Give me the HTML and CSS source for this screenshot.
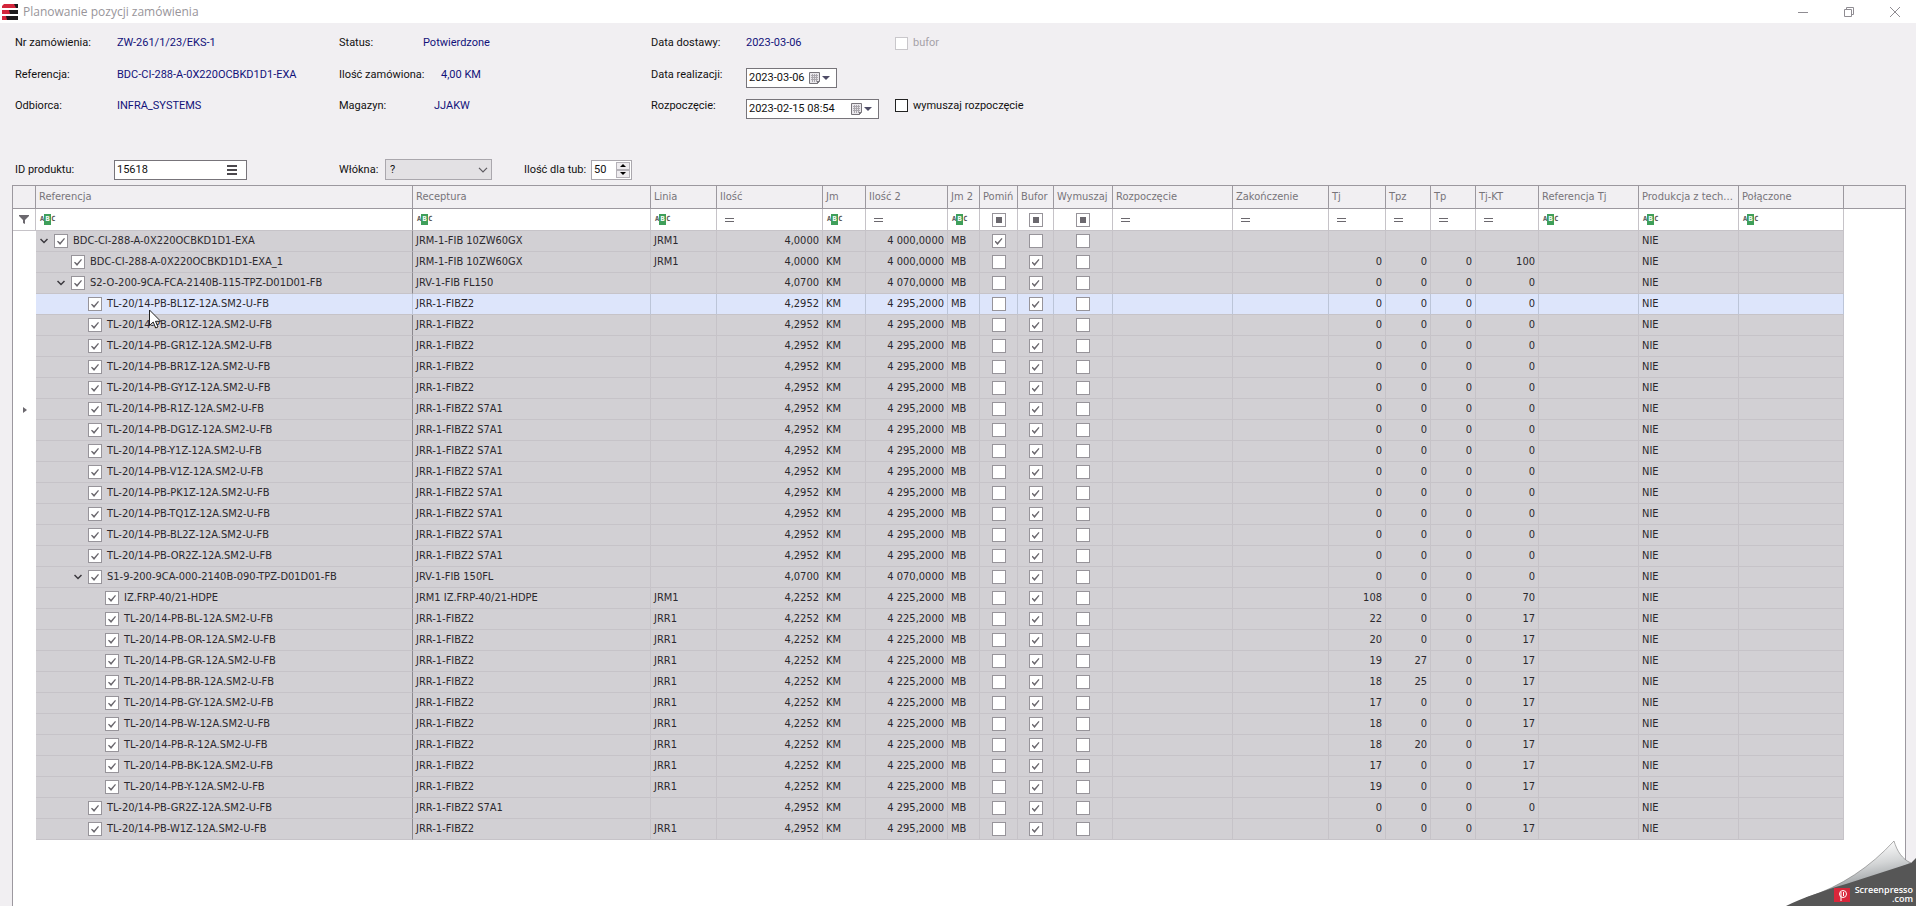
FILE: index.html
```html
<!DOCTYPE html>
<html lang="pl">
<head>
    <meta charset="UTF-8">
    <meta name="viewport" content="width=device-width, initial-scale=1.0">
    <title>Planowanie pozycji zamówienia</title>
    <link rel="stylesheet" href="styles.css">
</head>
<body>
    <header class="titlebar">
        <svg class="app-icon" width="16" height="16" viewBox="0 0 16 16">
            <path fill="#1d1a1c" d="M2 0h14v4H2zM0 6h16v4H0zM0 12h16v4H0z"/>
            <path fill="#d3263b" d="M2 0h10l2 4H0V2zM0 6h7l1 4H0zM0 12h4l1 4H0z"/>
            <path fill="#fff" d="M0 4h16v1H0zM8 10h8v1H8z"/>
        </svg>
        <h1>Planowanie pozycji zamówienia</h1>
        <div class="win-buttons">
            <button type="button" aria-label="Minimalizuj"><svg width="12" height="12" viewBox="0 0 12 12"><path d="M1 6.5h10"/></svg></button>
            <button type="button" aria-label="Przywróć"><svg width="12" height="12" viewBox="0 0 12 12"><path d="M1.5 3.5h7v7h-7zM3.5 3.5v-2h7v7h-2"/></svg></button>
            <button type="button" aria-label="Zamknij"><svg width="12" height="12" viewBox="0 0 12 12"><path d="M1 1l10 10M11 1L1 11"/></svg></button>
        </div>
    </header>

    <section class="info">
        <span>Nr zamówienia:</span>
        <span class="value">ZW-261/1/23/EKS-1</span>
        <div class="pair status"><span>Status:</span><span class="value">Potwierdzone</span></div>
        <span>Data dostawy:</span>
        <span class="value">2023-03-06</span>
        <label class="check off"><input type="checkbox" disabled>bufor</label>

        <span>Referencja:</span>
        <span class="value">BDC-CI-288-A-0X220OCBKD1D1-EXA</span>
        <div class="pair amount"><span>Ilość zamówiona:</span><span class="value">4,00 KM</span></div>
        <label for="realizacja">Data realizacji:</label>
        <div class="box date short">
            <input type="text" id="realizacja" value="2023-03-06">
            <button type="button" aria-label="Kalendarz"><svg class="cal" width="21" height="12" viewBox="0 0 21 12"><use href="#calendar"/></svg></button>
        </div>
        <span></span>

        <span>Odbiorca:</span>
        <span class="value">INFRA_SYSTEMS</span>
        <div class="pair store"><span>Magazyn:</span><span class="value">JJAKW</span></div>
        <label for="rozpoczecie">Rozpoczęcie:</label>
        <div class="box date">
            <input type="text" id="rozpoczecie" value="2023-02-15 08:54">
            <button type="button" aria-label="Kalendarz"><svg class="cal" width="21" height="12" viewBox="0 0 21 12"><use href="#calendar"/></svg></button>
        </div>
        <label class="check"><input type="checkbox">wymuszaj rozpoczęcie</label>
    </section>

    <section class="product">
        <label class="l-id" for="produkt">ID produktu:</label>
        <div class="box id">
            <input type="text" id="produkt" value="15618">
            <button type="button" aria-label="Lista"><svg width="10" height="10" viewBox="0 0 10 10"><path fill="#4b484d" d="M0 0h10v2H0zM0 4h10v2H0zM0 8h10v2H0z"/></svg></button>
        </div>
        <label class="l-fib" for="wlokna">Włókna:</label>
        <div class="fibers">
            <select id="wlokna"><option>?</option></select>
            <svg width="10" height="6" viewBox="0 0 10 6"><path fill="none" stroke="#5d5a60" stroke-width="1.2" d="M1 .8l4 4 4-4"/></svg>
        </div>
        <label class="l-tub" for="tub">Ilość dla tub:</label>
        <div class="box spin">
            <input type="text" id="tub" value="50">
            <div class="arrows">
                <button type="button" aria-label="Więcej"><svg width="6" height="3" viewBox="0 0 6 3"><path d="M3 0l3 3H0z"/></svg></button>
                <button type="button" aria-label="Mniej"><svg width="6" height="3" viewBox="0 0 6 3"><path d="M0 0h6L3 3z"/></svg></button>
            </div>
        </div>
    </section>

    <main class="grid">
        <table>
            <colgroup id="cols"></colgroup>
            <thead>
                <tr id="head"></tr>
                <tr id="filter" class="filter"></tr>
            </thead>
            <tbody id="rows"></tbody>
        </table>
    </main>

    <svg class="cursor" width="13" height="20" viewBox="0 0 13 20">
        <path fill="#fff" stroke="#222" d="M.5 1v15.5l3.7-3.5 2.5 6 2.3-1-2.5-5.7h5.2z"/>
    </svg>

    <div class="curl">
        <svg width="130" height="68" viewBox="0 0 130 68">
            <defs>
                <linearGradient id="paper" x1="0.5" y1="0.1" x2="0.75" y2="0.9">
                    <stop offset="0" stop-color="#fbfbfb"/>
                    <stop offset="0.4" stop-color="#d3d5d6"/>
                    <stop offset="0.8" stop-color="#9a9ea1"/>
                    <stop offset="1" stop-color="#8b8f92"/>
                </linearGradient>
            </defs>
            <path fill="url(#paper)" stroke="#777" stroke-width=".6" d="M108 3c3 10 8 18 17 22L86 42 20 60C56 48 84 29 108 3z"/>
            <path fill="#565656" d="M0 68C16 60 40 52 60 46L125 25l5-5v48z"/>
            <rect x="48" y="50" width="16" height="14" fill="#d9263a"/>
            <g fill="none" stroke="#fff">
                <circle cx="57" cy="56" r="3.5"/>
                <path d="M55 54v9M57.500 54v4"/>
            </g>
        </svg>
        <p>Screenpresso<br>.com</p>
    </div>

    <svg class="defs" width="0" height="0">
        <symbol id="calendar" viewBox="0 0 21 12">
            <path fill="#e9e7eb" stroke="#77747a" d="M.5.5h10v8.5l-2 2.5h-8z"/>
            <path stroke="#aaa7ad" d="M2 3.5h7M2 5.5h7M2 7.5h7M3.5 2v8M5.5 2v8M7.5 2v8"/>
            <path fill="#77747a" d="M8 12V9h3z"/>
            <path fill="#4e4c66" d="M13 4h8l-4 4z"/>
        </symbol>
    </svg>

    <script>
        // name, width, filter type, cell align
        const columns=[
            ["",23,"funnel",""],
            ["Referencja",377,"abc",""],
            ["Receptura",238,"abc",""],
            ["Linia",66,"abc",""],
            ["Ilość",106,"eq","num"],
            ["Jm",43,"abc",""],
            ["Ilość 2",82,"eq","num"],
            ["Jm 2",32,"abc",""],
            ["Pomiń",38,"box","mid"],
            ["Bufor",36,"box","mid"],
            ["Wymuszaj",59,"box","mid"],
            ["Rozpoczęcie",120,"eq",""],
            ["Zakończenie",96,"eq",""],
            ["Tj",57,"eq","num"],
            ["Tpz",45,"eq","num"],
            ["Tp",45,"eq","num"],
            ["Tj-KT",63,"eq","num"],
            ["Referencja Tj",100,"abc",""],
            ["Produkcja z tech...",100,"abc",""],
            ["Połączone",105,"abc",""],
            ["",0,"",""]
        ];

        // level, reference, recipe, line, qty, qty 2, tj, tpz, tp, tj-kt
        const z="JRR-1-FIBZ2", s="JRR-1-FIBZ2 S7A1";
        const a="4,2952", a2="4 295,2000", b="4,2252", b2="4 225,2000";
        const items=[
            [0,"BDC-CI-288-A-0X220OCBKD1D1-EXA","JRM-1-FIB 10ZW60GX","JRM1","4,0000","4 000,0000","","","",""],
            [1,"BDC-CI-288-A-0X220OCBKD1D1-EXA_1","JRM-1-FIB 10ZW60GX","JRM1","4,0000","4 000,0000",0,0,0,100],
            [1,"S2-O-200-9CA-FCA-2140B-115-TPZ-D01D01-FB","JRV-1-FIB FL150","","4,0700","4 070,0000",0,0,0,0],
            [2,"TL-20/14-PB-BL1Z-12A.SM2-U-FB",z,"",a,a2,0,0,0,0],
            [2,"TL-20/14-PB-OR1Z-12A.SM2-U-FB",z,"",a,a2,0,0,0,0],
            [2,"TL-20/14-PB-GR1Z-12A.SM2-U-FB",z,"",a,a2,0,0,0,0],
            [2,"TL-20/14-PB-BR1Z-12A.SM2-U-FB",z,"",a,a2,0,0,0,0],
            [2,"TL-20/14-PB-GY1Z-12A.SM2-U-FB",z,"",a,a2,0,0,0,0],
            [2,"TL-20/14-PB-R1Z-12A.SM2-U-FB",s,"",a,a2,0,0,0,0],
            [2,"TL-20/14-PB-DG1Z-12A.SM2-U-FB",s,"",a,a2,0,0,0,0],
            [2,"TL-20/14-PB-Y1Z-12A.SM2-U-FB",s,"",a,a2,0,0,0,0],
            [2,"TL-20/14-PB-V1Z-12A.SM2-U-FB",s,"",a,a2,0,0,0,0],
            [2,"TL-20/14-PB-PK1Z-12A.SM2-U-FB",s,"",a,a2,0,0,0,0],
            [2,"TL-20/14-PB-TQ1Z-12A.SM2-U-FB",s,"",a,a2,0,0,0,0],
            [2,"TL-20/14-PB-BL2Z-12A.SM2-U-FB",s,"",a,a2,0,0,0,0],
            [2,"TL-20/14-PB-OR2Z-12A.SM2-U-FB",s,"",a,a2,0,0,0,0],
            [2,"S1-9-200-9CA-000-2140B-090-TPZ-D01D01-FB","JRV-1-FIB 150FL","","4,0700","4 070,0000",0,0,0,0],
            [3,"IZ.FRP-40/21-HDPE","JRM1 IZ.FRP-40/21-HDPE","JRM1",b,b2,108,0,0,70],
            [3,"TL-20/14-PB-BL-12A.SM2-U-FB",z,"JRR1",b,b2,22,0,0,17],
            [3,"TL-20/14-PB-OR-12A.SM2-U-FB",z,"JRR1",b,b2,20,0,0,17],
            [3,"TL-20/14-PB-GR-12A.SM2-U-FB",z,"JRR1",b,b2,19,27,0,17],
            [3,"TL-20/14-PB-BR-12A.SM2-U-FB",z,"JRR1",b,b2,18,25,0,17],
            [3,"TL-20/14-PB-GY-12A.SM2-U-FB",z,"JRR1",b,b2,17,0,0,17],
            [3,"TL-20/14-PB-W-12A.SM2-U-FB",z,"JRR1",b,b2,18,0,0,17],
            [3,"TL-20/14-PB-R-12A.SM2-U-FB",z,"JRR1",b,b2,18,20,0,17],
            [3,"TL-20/14-PB-BK-12A.SM2-U-FB",z,"JRR1",b,b2,17,0,0,17],
            [3,"TL-20/14-PB-Y-12A.SM2-U-FB",z,"JRR1",b,b2,19,0,0,17],
            [2,"TL-20/14-PB-GR2Z-12A.SM2-U-FB",s,"",a,a2,0,0,0,0],
            [2,"TL-20/14-PB-W1Z-12A.SM2-U-FB",z,"JRR1",a,a2,0,0,0,17]
        ];
        const parents=[0,2,16];
        const selected=3;
        const current=8;

        const filters={
            "":"",
            funnel:'<svg class="funnel" width="10" height="9" viewBox="0 0 10 9"><path d="M0 0h10v1L6 5v4L4 8V5L0 1z"/></svg>',
            abc:'<span class="abc"><i>A</i><b>B</b><i>C</i></span>',
            eq:'<svg class="eq" width="9" height="4" viewBox="0 0 9 4"><path d="M0 0h9v1H0zM0 3h9v1H0z"/></svg>',
            box:'<input type="checkbox" class="any" aria-label="Filtr">'
        };
        const arrow='<svg width="8" height="6" viewBox="0 0 8 6"><path d="M.5 1L4 4.5 7.5 1"/></svg>';
        const tick=(on,name)=>`<input type="checkbox" aria-label="${name}" ${on?"checked":""}>`;

        document.getElementById("cols").innerHTML=columns.map(c=>c[1]?`<col style="width:${c[1]}px">`:"<col>").join("");
        document.getElementById("head").innerHTML=columns.map(c=>`<th>${c[0]}</th>`).join("");
        document.getElementById("filter").innerHTML=columns.map(c=>`<td class="${c[2]=="box"?"mid":""}">${filters[c[2]]}</td>`).join("");

        document.getElementById("rows").innerHTML=items.map((r,i)=>{
            const tree=`<div class="tree" style="padding-left:${r[0]*17}px"><span class="toggle">${parents.includes(i)?arrow:""}</span>${tick(true,"Wybierz")}<span>${r[1]}</span></div>`;
            const mark=i==current?'<svg class="mark" width="4" height="6" viewBox="0 0 4 6"><path d="M0 0l4 3-4 3z"/></svg>':"";
            const cells=[mark,tree,r[2],r[3],r[4],"KM",r[5],"MB",tick(i==0,"Pomiń"),tick(i!=0,"Bufor"),tick(false,"Wymuszaj"),"","",r[6],r[7],r[8],r[9],"","NIE","",""];
            return `<tr class="${i==selected?"selected":""}">`+cells.map((c,n)=>`<td class="${columns[n][3]}">${c}</td>`).join("")+"</tr>";
        }).join("");

        document.querySelectorAll(".any").forEach(box=>box.indeterminate=true);
    </script>
</body>
</html>
```
FILE: styles.css
```css
*{
    margin:0;
    padding:0;
    box-sizing: border-box;
}
body{
    height: 100vh;
    display: flex;
    flex-direction: column;
    overflow: hidden;
    position: relative;
    background-color: #f1eff2;
    color: #111;
    font-family: Roboto, "Liberation Sans", sans-serif;
    font-size: 11px;
    line-height: 16px;
}
button, input, select{
    font: inherit;
    color: inherit;
    border: none;
    background: none;
    outline: none;
}
button{
    display: flex;
    align-items: center;
    justify-content: center;
}
.defs{
    position: absolute;
}

/* title bar */
.titlebar{
    height: 23px;
    flex: none;
    display: flex;
    align-items: center;
    gap: 5px;
    padding-left: 2px;
    background-color: #fff;
}
.titlebar h1{
    flex: 1;
    font-family: "Open Sans", sans-serif;
    font-size: 12px;
    font-weight: normal;
    color: #98959a;
}
.win-buttons{
    display: flex;
    gap: 4px;
}
.win-buttons button{
    width: 42px;
    height: 20px;
}
.win-buttons path{
    fill: none;
    stroke: #8f8c92;
}

/* order info */
.info{
    flex: none;
    display: grid;
    grid-template-columns: 102px 222px 312px 95px 149px 1fr;
    grid-template-rows: 32px 31px 31px;
    align-items: center;
    padding: 4px 15px 0;
}
.value{
    color: #12127a;
}
.pair{
    display: flex;
}
.status span:first-child{
    width: 84px;
}
.amount span:first-child{
    width: 102px;
}
.store span:first-child{
    width: 95px;
}
.box{
    height: 20px;
    display: flex;
    align-items: center;
    background-color: #fff;
    border: 1px solid #77747a;
}
.box input{
    flex: 1;
    min-width: 0;
    padding-left: 2px;
}
.date{
    width: 133px;
    margin-top: 6px;
    padding-right: 6px;
}
.short{
    width: 91px;
}
.check{
    display: flex;
    align-items: center;
    gap: 5px;
}
.off{
    color: #a5a2a8;
}
input[type=checkbox]{
    appearance: none;
    flex: none;
    display: block;
    width: 14px;
    height: 14px;
    background-color: #fff;
    border: 1px solid #97949a;
}
.check input[type=checkbox]{
    width: 13px;
    height: 13px;
    border-color: #222;
}
.off input[type=checkbox]{
    border-color: #c9c7cb;
}
td input:checked::after{
    content: "";
    display: block;
    width: 8px;
    height: 7px;
    margin: 3px 2px;
    background-color: #6b686e;
    clip-path: polygon(0 50%, 12% 38%, 38% 65%, 88% 0, 100% 12%, 38% 100%);
}
td input:indeterminate::after{
    content: "";
    display: block;
    width: 6px;
    height: 6px;
    margin: 3px;
    background-color: #6b686e;
}

/* product row */
.product{
    flex: none;
    display: flex;
    align-items: center;
    height: 21px;
    margin: 38px 15px 5px;
    white-space: nowrap;
}
.l-id{
    width: 99px;
}
.id{
    width: 133px;
    padding-right: 9px;
}
.l-fib{
    width: 46px;
    margin-left: 92px;
}
.fibers{
    position: relative;
    width: 107px;
}
.fibers select{
    display: block;
    appearance: none;
    width: 100%;
    height: 21px;
    padding-left: 4px;
    background-color: #e3e1e4;
    border: 1px solid #aaa7ad;
}
.fibers svg{
    position: absolute;
    right: 4px;
    top: 8px;
}
.l-tub{
    width: 67px;
    margin-left: 32px;
}
.spin{
    width: 41px;
    padding-right: 1px;
    border-color: #aaa7ad;
}
.arrows{
    width: 14px;
}
.arrows button{
    width: 14px;
    height: 8px;
    background-color: #eeecef;
    border: 1px solid #b5b2b8;
}

/* data grid */
.grid{
    flex: 1;
    min-height: 0;
    overflow: hidden;
    margin: 0 10px 0 12px;
    background-color: #fff;
    border: 1px solid #9c989f;
    border-bottom: none;
}
table{
    width: 100%;
    table-layout: fixed;
    border-collapse: separate;
    border-spacing: 0;
    font-family: "DejaVu Sans Condensed", "DejaVu Sans", sans-serif;
    font-size: 11px;
}
th{
    height: 23px;
    padding: 0 3px;
    overflow: hidden;
    white-space: nowrap;
    text-align: left;
    font-weight: normal;
    color: #77747a;
    background-color: #f1eff2;
    border-right: 1px solid #9c989f;
    border-bottom: 1px solid #9c989f;
}
th:last-child{
    border-right: none;
}
td{
    height: 21px;
    padding: 0 3px;
    line-height: 14px;
    white-space: nowrap;
    color: #2b282d;
    background-color: #d2d0d4;
    border-right: 1px solid #c6c3c8;
    border-bottom: 1px solid #c6c3c8;
}
.filter td{
    height: 22px;
    background-color: #fff;
}
td:nth-child(2){
    border-right-color: #8c898f;
}
.selected td{
    background-color: #dde5fb;
    border-right-color: #bcc5d8;
}
tbody td:first-child, tr td:last-child{
    background-color: #fff;
    border: none;
}
.num{
    text-align: right;
}
.mid{
    padding: 0;
}
.mid input{
    margin: 0 auto;
}
.tree{
    display: flex;
    align-items: center;
}
.tree input{
    margin-right: 5px;
}
.toggle{
    width: 15px;
    padding-left: 1px;
    display: flex;
}
.toggle path{
    fill: none;
    stroke: #3a373d;
    stroke-width: 1.5;
}
.mark, .funnel, .eq{
    display: block;
    margin: 0 auto;
    fill: #6b686e;
}
.eq{
    margin: 0 5px;
}
.abc{
    display: flex;
    align-items: center;
    padding-left: 1px;
    font-family: "DejaVu Sans Mono", monospace;
    font-size: 7px;
    line-height: 11px;
    color: #555;
}
.abc i{
    font-style: normal;
    font-weight: bold;
}
.abc b{
    width: 7px;
    text-align: center;
    color: #fff;
    background-color: #3f9f5a;
}

.cursor{
    position: absolute;
    left: 149px;
    top: 309px;
}

/* page corner */
.curl{
    position: absolute;
    right: 0;
    bottom: 0;
    height: 68px;
}
.curl p{
    position: absolute;
    right: 3px;
    bottom: 3px;
    text-align: right;
    font-family: "Open Sans", sans-serif;
    font-size: 9px;
    font-weight: 600;
    line-height: 9px;
    color: #fff;
}
```
